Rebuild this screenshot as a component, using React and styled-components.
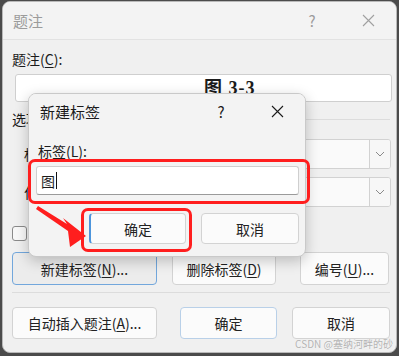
import styled, { createGlobalStyle } from 'styled-components';

const GlobalStyle = createGlobalStyle`
  html, body {
    margin: 0;
    padding: 0;
    background: #4b4b4b;
  }
  * {
    box-sizing: border-box;
  }
`;

const Frame = styled.div`
  width: 399px;
  height: 356px;
  padding: 1px 2px 3px 2px;
  font-family: "Noto Sans CJK SC", "Noto Sans", sans-serif;
  font-size: 14px;
  color: #1b1b1b;
`;

const Dialog = styled.div`
  position: relative;
  height: 352px;
  background: #f0f0f0;
  border: 1px solid #b9b9b9;
  border-radius: 8px;
  overflow: hidden;
`;

const TitleBar = styled.div`
  display: flex;
  align-items: center;
  height: ${p => p.$h}px;
  padding-left: ${p => p.$pad}px;
  background: #f3f3f3;
  border-bottom: ${p => (p.$line ? '1px solid #e2e2e2' : 'none')};
`;

const TitleText = styled.div`
  flex: 1;
  font-size: 15px;
  color: ${p => (p.$dim ? '#9b9b9b' : '#1b1b1b')};
`;

const TitleButton = styled.div`
  width: 56px;
  height: 100%;
  display: flex;
  align-items: center;
  justify-content: center;
  font-size: 15px;
  color: ${p => (p.$dim ? '#9b9b9b' : '#1b1b1b')};
`;

const Body = styled.div`
  padding: 9px 6px 0 9px;
`;

const Label = styled.div`
  height: 20px;
  line-height: 20px;
  white-space: nowrap;
`;

const Key = styled.span`
  text-decoration: underline;
  text-underline-offset: 2px;
`;

const CaptionInput = styled.div`
  height: 28px;
  margin: 5px -2px 0 3px;
  padding-left: 188px;
  background: #fff;
  border: 1px solid #cfcfcf;
  border-radius: 3px;
  font-family: "Liberation Serif", "Noto Sans CJK SC", serif;
  font-weight: 700;
  font-size: 18px;
  line-height: 26px;
  letter-spacing: 1px;
  white-space: pre;
`;

const GroupHeader = styled.div`
  display: flex;
  align-items: center;
  height: 20px;
  margin-top: 7px;
  gap: 8px;
`;

const GroupLine = styled.div`
  flex: 1;
  height: 1px;
  background: #dcdcdc;
`;

const OptionRow = styled.div`
  display: flex;
  align-items: center;
  height: 30px;
  margin: ${p => p.$top}px -1px 0 12px;
`;

const OptionLabel = styled.div`
  width: 76px;
  white-space: nowrap;
`;

const Select = styled.div`
  flex: 1;
  height: 100%;
  display: flex;
  background: #fafafa;
  border: 1px solid #d2d2d2;
  border-radius: 3px;
  overflow: hidden;
`;

const SelectValue = styled.div`
  flex: 1;
  padding-left: 8px;
  line-height: 28px;
`;

const SelectArrow = styled.div`
  width: 21px;
  display: flex;
  align-items: center;
  justify-content: center;
  border-left: 1px solid #d2d2d2;
  background: #f7f7f7;
`;

const CheckRow = styled.div`
  display: flex;
  align-items: center;
  gap: 8px;
  height: 20px;
  margin-top: 16px;
`;

const CheckBox = styled.div`
  width: 15px;
  height: 15px;
  border: 1px solid #8a8a8a;
  border-radius: 3px;
  background: #f8f8f8;
`;

const ButtonRow = styled.div`
  display: flex;
  align-items: center;
  height: ${p => p.$h}px;
  margin-top: ${p => p.$top}px;
  margin-right: ${p => p.$right || 0}px;
`;

const Button = styled.div`
  width: ${p => p.$w}px;
  height: 100%;
  margin-left: ${p => p.$ml || 0}px;
  display: flex;
  align-items: center;
  justify-content: center;
  background: ${p => (p.$focus ? '#ececec' : '#fbfbfb')};
  border: 1px solid ${p => (p.$focus ? '#72a7dc' : p.$def ? '#b9d0e8' : '#d3d3d3')};
  border-left: ${p => (p.$ring ? '2px solid #4d95dc' : null)};
  border-radius: 4px;
  white-space: nowrap;
  color: #222;
`;

const Divider = styled.div`
  height: 1px;
  margin-top: 7px;
  background: #dcdcdc;
`;

const Modal = styled.div`
  position: absolute;
  left: 25px;
  top: 91px;
  width: 278px;
  height: 164px;
  background: #f3f3f3;
  border: 1px solid #c9c9c9;
  border-radius: 8px;
  box-shadow: 0 4px 14px rgba(0, 0, 0, 0.22);
  overflow: hidden;
`;

const ModalBody = styled.div`
  padding: 13px 6px 0 9px;
`;

const TextField = styled.div`
  height: 29px;
  margin: 5px 0 0 -2px;
  padding-left: 4px;
  display: flex;
  align-items: center;
  background: #fff;
  border: 1px solid #cfcfcf;
  border-bottom-color: #9a9a9a;
  border-radius: 3px;
`;

const Caret = styled.span`
  display: inline-block;
  width: 1px;
  height: 17px;
  margin-left: 1px;
  background: #111;
`;

const Highlight = styled.div`
  position: absolute;
  left: ${p => p.$x}px;
  top: ${p => p.$y}px;
  width: ${p => p.$w}px;
  height: ${p => p.$h}px;
  border: 3px solid #ff1e1e;
  border-radius: 7px;
`;

const ArrowLayer = styled.svg`
  position: absolute;
  left: 0;
  top: 0;
`;

const Watermark = styled.div`
  position: absolute;
  right: 3px;
  bottom: 1px;
  font-size: 10px;
  color: #b3b3b3;
  text-shadow: 0 0 1px #fff;
  white-space: nowrap;
`;

const CloseIcon = ({ color }) => (
  <svg width="13" height="13" viewBox="0 0 13 13">
    <path d="M1 1L12 12M12 1L1 12" stroke={color} strokeWidth="1.1" />
  </svg>
);

const Chevron = () => (
  <svg width="10" height="6" viewBox="0 0 10 6">
    <path d="M1 1L5 5L9 1" stroke="#8a8a8a" strokeWidth="1" fill="none" />
  </svg>
);

const App = () => (
  <Frame>
    <GlobalStyle />
    <Dialog>
      <TitleBar $h={38} $pad={10} $line>
        <TitleText $dim>题注</TitleText>
        <TitleButton $dim>?</TitleButton>
        <TitleButton $dim>
          <CloseIcon color="#a0a0a0" />
        </TitleButton>
      </TitleBar>
      <Body>
        <Label>题注(<Key>C</Key>):</Label>
        <CaptionInput>图 3-3</CaptionInput>
        <GroupHeader>
          <span>选项</span>
          <GroupLine />
        </GroupHeader>
        <OptionRow $top={10}>
          <OptionLabel>标签(<Key>L</Key>):</OptionLabel>
          <Select>
            <SelectValue>图</SelectValue>
            <SelectArrow><Chevron /></SelectArrow>
          </Select>
        </OptionRow>
        <OptionRow $top={8}>
          <OptionLabel>位置(<Key>P</Key>):</OptionLabel>
          <Select>
            <SelectValue>所选项目下方</SelectValue>
            <SelectArrow><Chevron /></SelectArrow>
          </Select>
        </OptionRow>
        <CheckRow>
          <CheckBox />
          <span>从题注中排除标签(<Key>E</Key>)</span>
        </CheckRow>
        <ButtonRow $h={33} $top={9}>
          <Button $w={145} $focus>新建标签(<Key>N</Key>)...</Button>
          <Button $w={104} $ml={15}>删除标签(<Key>D</Key>)</Button>
          <Button $w={89} $ml={24}>编号(<Key>U</Key>)...</Button>
        </ButtonRow>
        <Divider />
        <ButtonRow $h={32} $top={14}>
          <Button $w={145}>自动插入题注(<Key>A</Key>)...</Button>
          <Button $w={97} $ml={23} $def>确定</Button>
          <Button $w={98} $ml={15}>取消</Button>
        </ButtonRow>
      </Body>

      <Modal>
        <TitleBar $h={34} $pad={11}>
          <TitleText>新建标签</TitleText>
          <TitleButton>?</TitleButton>
          <TitleButton>
            <CloseIcon color="#1b1b1b" />
          </TitleButton>
        </TitleBar>
        <ModalBody>
          <Label>标签(<Key>L</Key>):</Label>
          <TextField>
            图<Caret />
          </TextField>
          <ButtonRow $h={31} $top={18}>
            <Button $w={97} $ml={51} $ring>确定</Button>
            <Button $w={98} $ml={15}>取消</Button>
          </ButtonRow>
        </ModalBody>
      </Modal>

      <Highlight $x={25} $y={157} $w={282} $h={45} />
      <Highlight $x={78} $y={206} $w={111} $h={44} />
      <ArrowLayer width="100" height="260">
        <polygon
          points="35,204 64,222 60,216 83,234 67,245 65,229 33,207"
          fill="#ff1e1e"
        />
      </ArrowLayer>

      <Watermark>CSDN @塞纳河畔的砂</Watermark>
    </Dialog>
  </Frame>
);

export default App;
